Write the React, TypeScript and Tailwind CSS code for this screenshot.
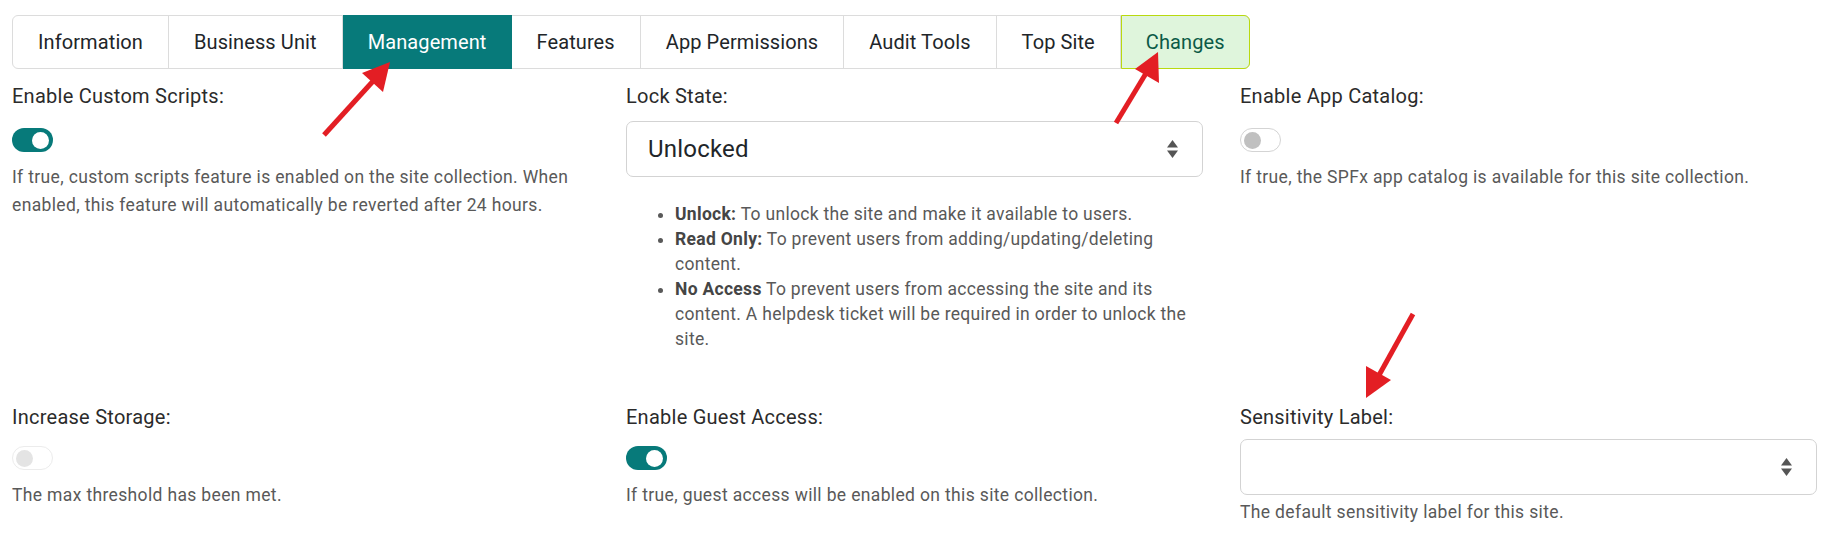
import React from 'react';

const tabs = ['Information', 'Business Unit', 'Management', 'Features', 'App Permissions', 'Audit Tools', 'Top Site'];

const Toggle = ({ on, disabled }: { on?: boolean; disabled?: boolean }) =>
  on ? (
    <div className="w-[41px] h-[24px] rounded-full bg-[#077a7a] flex items-center justify-end px-[4px]">
      <div className="w-[17px] h-[17px] rounded-full bg-white" />
    </div>
  ) : (
    <div
      className={
        disabled
          ? 'w-[41px] h-[24px] rounded-full border border-[#ececec] flex items-center px-[3px]'
          : 'w-[41px] h-[24px] rounded-full border border-[#d4d4d4] flex items-center px-[3px]'
      }
    >
      <div className={disabled ? 'w-[17px] h-[17px] rounded-full bg-[#e4e4e4]' : 'w-[17px] h-[17px] rounded-full bg-[#c0c0c0]'} />
    </div>
  );

const SelectArrows = () => (
  <svg width="11" height="20" viewBox="0 0 11 20">
    <polygon points="5.5,1 11,8.5 0,8.5" fill="#555" />
    <polygon points="0,11.5 11,11.5 5.5,19" fill="#555" />
  </svg>
);

const Select = ({ value }: { value?: string }) => (
  <div className="h-[56px] w-full border border-[#d3d3d3] rounded-[7px] flex items-center justify-between pl-[21px] pr-[24px]">
    <span className="text-[24px] tracking-[0.2px] text-[#212529]">{value}</span>
    <SelectArrows />
  </div>
);

const Label = ({ children }: { children: React.ReactNode }) => (
  <div className="text-[20px] leading-[30px] tracking-[0.25px] text-[#2b2b2b]">{children}</div>
);

const Help = ({ children, className }: { children: React.ReactNode; className?: string }) => (
  <div className={'text-[17.5px] leading-[28px] tracking-[0.35px] text-[#595959] ' + (className ?? '')}>{children}</div>
);

const Arrows = () => (
  <svg className="absolute inset-0 pointer-events-none" width="1824" height="534" viewBox="0 0 1824 534">
    {/* Management */}
    <line x1="324" y1="135" x2="375" y2="79" stroke="#e31e24" strokeWidth="5" />
    <polygon points="390,62 383,92 362,73" fill="#e31e24" />
    {/* Changes */}
    <line x1="1116" y1="123" x2="1148" y2="70" stroke="#e31e24" strokeWidth="5" />
    <polygon points="1158,52 1159,83 1135,69" fill="#e31e24" />
    {/* Sensitivity */}
    <line x1="1413" y1="314" x2="1378" y2="377" stroke="#e31e24" strokeWidth="5" />
    <polygon points="1366,398 1366,366 1391,380" fill="#e31e24" />
  </svg>
);

export default function App() {
  return (
    <div className="relative w-full h-[534px] bg-white overflow-hidden font-['Segoe_UI','Roboto','Liberation_Sans',sans-serif]">
      {/* Tabs */}
      <div className="pt-[15px] pl-[12px]">
        <div className="inline-flex h-[54px] border border-[#dcdcdc] rounded-[6px] text-[20px] tracking-[0.1px] text-[#212529]">
          {tabs.map((t) => (
            <div
              key={t}
              className={
                t === 'Management'
                  ? 'flex items-center px-[25px] bg-[#077a7a] text-white -my-px'
                  : 'flex items-center px-[25px] border-r border-[#dcdcdc]'
              }
            >
              {t}
            </div>
          ))}
          <div className="flex items-center px-[24px] bg-[#dff5dc] text-[#0b5a47] border border-[#b9d90f] rounded-r-[6px] -my-px -mr-px">
            Changes
          </div>
        </div>
      </div>

      {/* Form */}
      <div className="grid grid-cols-[577px_577px_577px] gap-x-[37px] gap-y-[50px] pl-[12px] mt-[12px]">
        <div>
          <Label>Enable Custom Scripts:</Label>
          <div className="mt-[17px]">
            <Toggle on />
          </div>
          <Help className="mt-[11px]">
            If true, custom scripts feature is enabled on the site collection. When enabled, this feature will
            automatically be reverted after 24 hours.
          </Help>
        </div>

        <div>
          <Label>Lock State:</Label>
          <div className="mt-[10px]">
            <Select value="Unlocked" />
          </div>
          <ul className="mt-[25px] list-disc pl-[49px] text-[17.5px] leading-[25px] tracking-[0.3px] text-[#595959]">
            <li>
              <b className="text-[#454545]">Unlock:</b> To unlock the site and make it available to users.
            </li>
            <li>
              <b className="text-[#454545]">Read Only:</b> To prevent users from adding/updating/deleting content.
            </li>
            <li>
              <b className="text-[#454545]">No Access</b> To prevent users from accessing the site and its content. A
              helpdesk ticket will be required in order to unlock the site.
            </li>
          </ul>
        </div>

        <div>
          <Label>Enable App Catalog:</Label>
          <div className="mt-[17px]">
            <Toggle />
          </div>
          <Help className="mt-[11px]">If true, the SPFx app catalog is available for this site collection.</Help>
        </div>

        <div>
          <Label>Increase Storage:</Label>
          <div className="mt-[14px]">
            <Toggle disabled />
          </div>
          <Help className="mt-[11px]">The max threshold has been met.</Help>
        </div>

        <div>
          <Label>Enable Guest Access:</Label>
          <div className="mt-[14px]">
            <Toggle on />
          </div>
          <Help className="mt-[11px]">If true, guest access will be enabled on this site collection.</Help>
        </div>

        <div>
          <Label>Sensitivity Label:</Label>
          <div className="mt-[7px]">
            <Select />
          </div>
          <Help className="mt-[3px]">The default sensitivity label for this site.</Help>
        </div>
      </div>

      <Arrows />
    </div>
  );
}
